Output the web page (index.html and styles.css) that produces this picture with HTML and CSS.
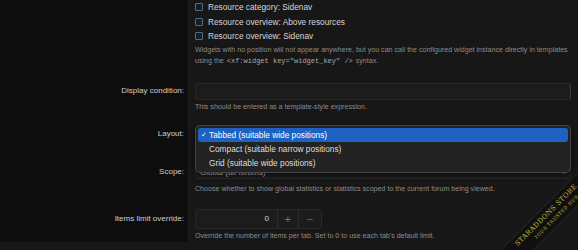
FILE: index.html
```html
<!DOCTYPE html>
<html lang="en">
<head>
    <meta charset="UTF-8">
    <meta name="viewport" content="width=device-width, initial-scale=1.0">
    <title>Widget options</title>
    <link rel="stylesheet" href="styles.css">
</head>
<body>
    <div class="form">
        <div class="row row-checks">
            <div class="label"></div>
            <div class="field">
                <ul class="checks">
                    <li><span class="box"></span>Resource category: Sidenav</li>
                    <li><span class="box"></span>Resource overview: Above resources</li>
                    <li><span class="box"></span>Resource overview: Sidenav</li>
                </ul>
                <p class="hint">Widgets with no position will not appear anywhere, but you can call the configured widget instance directly in templates using the <code>&lt;xf:widget key="widget_key" /&gt;</code> syntax.</p>
            </div>
        </div>

        <div class="row row-condition">
            <div class="label">Display condition:</div>
            <div class="field">
                <div class="input"></div>
                <p class="hint">This should be entered as a template-style expression.</p>
            </div>
        </div>

        <div class="row row-layout">
            <div class="label">Layout:</div>
            <div class="field">
                <div class="select">
                    <div class="menu">
                        <div class="opt selected"><span class="tick">✓</span>Tabbed (suitable wide positions)</div>
                        <div class="opt">Compact (suitable narrow positions)</div>
                        <div class="opt">Grid (suitable wide positions)</div>
                    </div>
                </div>
            </div>
        </div>

        <div class="row row-scope">
            <div class="label">Scope:</div>
            <div class="field">
                <div class="select"><span class="select-text">Global (all forums)</span><span class="arrows">⇕</span></div>
                <p class="hint">Choose whether to show global statistics or statistics scoped to the current forum being viewed.</p>
            </div>
        </div>

        <div class="row row-limit">
            <div class="label">Items limit override:</div>
            <div class="field">
                <div class="number">
                    <span class="num-value">0</span>
                    <span class="num-btn plus">+</span>
                    <span class="num-btn minus">−</span>
                </div>
                <p class="hint">Override the number of items per tab. Set to 0 to use each tab's default limit.</p>
            </div>
        </div>
    </div>

    <div class="corner">
        <div class="ribbon">
            <div class="ribbon-title">STARADDONS STORE</div>
            <div class="ribbon-sub">YOUR TRUSTED HUB</div>
        </div>
    </div>
</body>
</html>
```

FILE: styles.css
```css
html, body {
    margin: 0;
    height: 250px;
    overflow: hidden;
}
body {
    font-family: "Liberation Sans", Arial, sans-serif;
    background-color: #171717;
    color: #d4d4d4;
    position: relative;
}
.form {
    display: flex;
    flex-direction: column;
}
.row {
    display: grid;
    grid-template-columns: 189px 1fr;
}
.label {
    background-color: #0d0d0d;
    border-right: 1px solid #1f1f1f;
    text-align: right;
    font-size: 8px;
    color: #cfcfcf;
    padding-right: 4px;
}
.field {
    padding: 0 7px 0 6px;
}
.checks {
    list-style: none;
    margin: 0;
    padding: 0;
    font-size: 8.3px;
    line-height: 14.5px;
    color: #d6d6d6;
}
.checks li {
    display: flex;
    align-items: center;
}
.box {
    width: 6px;
    height: 6px;
    border: 1px solid #4d6f82;
    border-radius: 1px;
    background-color: #1b1e20;
    margin-right: 5px;
}
.hint {
    margin: 1px 0 0;
    font-size: 7.1px;
    line-height: 11px;
    color: #8c8c8c;
}
.hint code {
    font-family: "Liberation Mono", monospace;
    font-size: 7px;
    line-height: 1;
    margin: 0 1px;
    color: #a9a9a9;
}
.row-checks .field {
    padding-bottom: 10px;
}
.row-condition .label {
    padding-top: 6px;
    line-height: 15px;
}
.row-condition .field {
    padding-top: 6px;
    padding-bottom: 12px;
}
.input {
    height: 15px;
    background-color: #1c1c1c;
    border: 1px solid #282828;
    border-right-color: #3a3a3a;
    border-radius: 3px;
}
.row-condition .hint {
    margin-top: 2px;
}
.row-layout .field {
    padding-bottom: 22px;
}
.row-layout .label {
    line-height: 17px;
}
.select {
    position: relative;
    height: 14px;
    line-height: 14px;
    padding-left: 4px;
    font-size: 8px;
    color: #d0d0d0;
    background-color: #1c1c1c;
    border: 1px solid #282828;
    border-radius: 3px;
}
.select-text {
    position: relative;
    top: 2px;
}
.arrows {
    position: absolute;
    right: 4px;
    top: 1px;
    font-size: 6px;
    color: #999;
}
.menu {
    position: absolute;
    left: -1px;
    right: -1px;
    top: -1px;
    height: 42px;
    padding: 2px;
    background-color: #232323;
    border: 1px solid #454545;
    border-radius: 5px;
    box-shadow: 0 2px 6px rgba(0, 0, 0, 0.6);
    z-index: 2;
}
.opt {
    height: 14px;
    line-height: 14px;
    padding-left: 11px;
    font-size: 8.3px;
    color: #dedede;
    border-radius: 3px;
    position: relative;
}
.opt.selected {
    background-color: #1d62c2;
    color: #fff;
}
.tick {
    position: absolute;
    left: 3px;
    font-size: 7px;
}
.row-scope .label {
    line-height: 17px;
}
.row-scope .field {
    padding-bottom: 14px;
}
.row-scope .hint {
    margin-top: 5px;
}
.row-limit .label {
    line-height: 20px;
}
.number {
    display: flex;
    width: 125px;
    height: 18px;
    background-color: #1c1c1c;
    border: 1px solid #282828;
    border-radius: 3px;
    font-size: 8px;
    line-height: 18px;
}
.num-value {
    flex: 1;
    text-align: right;
    padding-right: 8px;
    color: #d8d8d8;
}
.num-btn {
    width: 20px;
    text-align: center;
    border-left: 1px solid #2c2c2c;
    font-size: 11px;
}
.plus {
    color: #3586d8;
}
.minus {
    width: 22px;
    color: #3f7aa3;
}
.row-limit .hint {
    margin-top: 2px;
}
.corner {
    position: absolute;
    right: 0;
    bottom: 0;
    width: 120px;
    height: 100px;
    overflow: hidden;
    z-index: 3;
}
.ribbon {
    position: absolute;
    left: 6px;
    top: 56px;
    width: 170px;
    height: 22px;
    transform: rotate(-45deg);
    background-color: rgba(16, 16, 16, 0.92);
    border-top: 1px solid #262626;
    border-bottom: 1px solid #262626;
    text-align: center;
    color: #c9b43a;
    font-family: "DejaVu Serif", serif;
}
.ribbon-title {
    font-size: 6.8px;
    letter-spacing: 0.4px;
    line-height: 10px;
    padding-top: 2px;
}
.ribbon-sub {
    font-size: 4.6px;
    letter-spacing: 0.5px;
    line-height: 7px;
    padding-left: 12px;
}
```
